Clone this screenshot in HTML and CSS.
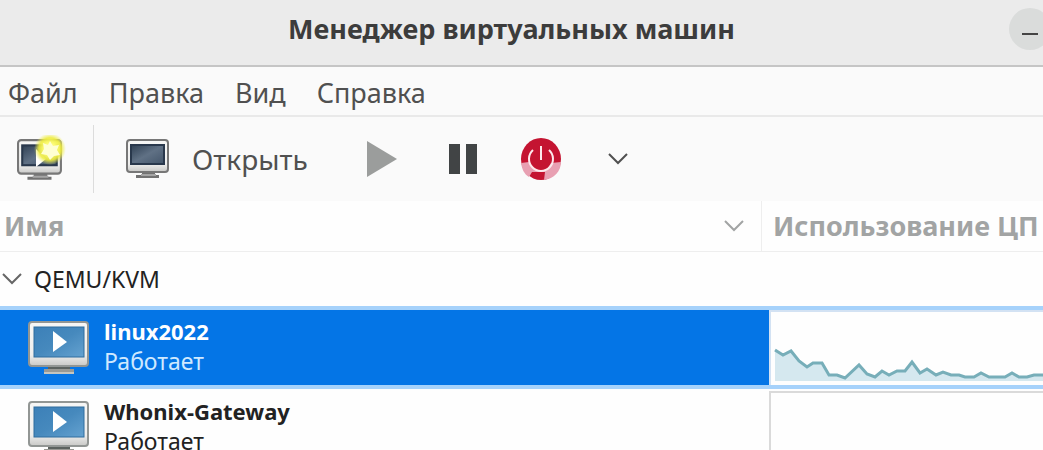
FILE: index.html
```html
<!DOCTYPE html>
<html lang="ru">
<head>
    <meta charset="UTF-8">
    <meta name="viewport" content="width=device-width, initial-scale=1.0">
    <title>Менеджер виртуальных машин</title>
    <link rel="stylesheet" href="styles.css">
</head>
<body>
    <!-- Shared icons -->
    <svg class="icon-defs" aria-hidden="true">
        <defs>
            <linearGradient id="screen-dark" x1="0" y1="0" x2="1" y2="1">
                <stop offset="0" stop-color="#2f4053"/>
                <stop offset="0.5" stop-color="#607185"/>
                <stop offset="1" stop-color="#43556a"/>
            </linearGradient>
            <linearGradient id="screen-blue" x1="0" y1="0" x2="1" y2="1">
                <stop offset="0" stop-color="#3c80b8"/>
                <stop offset="0.5" stop-color="#4689bd"/>
                <stop offset="1" stop-color="#65a2d0"/>
            </linearGradient>
            <linearGradient id="bezel" x1="0" y1="0" x2="0" y2="1">
                <stop offset="0" stop-color="#f6f6f5"/>
                <stop offset="0.75" stop-color="#eeeeed"/>
                <stop offset="1" stop-color="#c8c8c6"/>
            </linearGradient>
            <radialGradient id="glow">
                <stop offset="0" stop-color="#ffffd8"/>
                <stop offset="0.4" stop-color="#fbfa70"/>
                <stop offset="0.7" stop-color="#eeec3c" stop-opacity="0.9"/>
                <stop offset="1" stop-color="#f0f060" stop-opacity="0"/>
            </radialGradient>
            <symbol id="monitor" viewBox="0 0 44 40">
                <path d="M16 32h13v4h4v3H10v-3h6z" fill="#727272"/>
                <path d="M15 36h15" stroke="#a5a5a5" stroke-width="2"/>
                <rect x="1" y="1" width="41" height="32" rx="3" fill="url(#bezel)" stroke="#777" stroke-width="2"/>
                <rect x="5" y="6" width="33" height="19" fill="url(#screen-dark)" stroke="#29384c" stroke-width="2"/>
            </symbol>
            <symbol id="machine" viewBox="0 0 62 54">
                <path d="M21 44h20v4h5v5H16v-5h5z" fill="#999994"/>
                <path d="M20 45h22v3H20z" fill="#5c625f"/>
                <path d="M16 52h30" stroke="#c5c5bf" stroke-width="2"/>
                <rect x="1" y="1" width="59" height="44" rx="3" fill="url(#bezel)" stroke="#929694" stroke-width="2"/>
                <rect x="6" y="6" width="50" height="30" fill="url(#screen-blue)" stroke="#2e6c9e" stroke-width="1"/>
                <path d="M25 10v21l14-10z" fill="#fff"/>
            </symbol>
            <symbol id="chevron" viewBox="0 0 20 12">
                <path d="M1 1l9 9 9-9" fill="none" stroke="currentColor" stroke-width="2"/>
            </symbol>
        </defs>
    </svg>

    <header class="titlebar">
        <h1>Менеджер виртуальных машин</h1>
        <button class="minimize" type="button" aria-label="Свернуть"><span></span></button>
    </header>

    <nav class="menubar">
        <button type="button">Файл</button>
        <button type="button">Правка</button>
        <button type="button">Вид</button>
        <button type="button">Справка</button>
    </nav>

    <div class="toolbar">
        <button class="new-vm" type="button" aria-label="Создать виртуальную машину">
            <svg width="50" height="48" viewBox="0 0 50 48">
                <use href="#monitor" x="1" y="4" width="46" height="42"/>
                <path d="M20 14v18l10-8z" fill="#fff"/>
                <circle cx="34" cy="14" r="16" fill="url(#glow)"/>
                <path d="M34 6l3 5 6-1-2 5 3 5-6 1-4 4-3-5-6-1 3-5-1-6 5 2z" fill="#ffffd2"/>
            </svg>
        </button>
        <span class="separator"></span>
        <button class="open" type="button">
            <svg width="44" height="40"><use href="#monitor"/></svg>
            Открыть
        </button>
        <button class="run" type="button" aria-label="Запустить">
            <svg width="32" height="38" viewBox="0 0 32 38"><path d="M1 1v36l30-18z" fill="#9b9d9c"/></svg>
        </button>
        <button class="pause" type="button" aria-label="Приостановить">
            <svg width="30" height="32" viewBox="0 0 30 32"><path d="M1 1h11v30H1zM18 1h11v30H18z" fill="#414445"/></svg>
        </button>
        <button class="shutdown" type="button" aria-label="Выключить">
            <svg width="42" height="44" viewBox="0 0 42 44">
                <ellipse cx="21" cy="22" rx="20" ry="21" fill="#c41431"/>
                <path d="M1 26l8-1 3 5 5 4 9 0 5-8 10-1c0 9-7 17-17 18l1-8H12l-3 5c-5-3-7-8-8-14z" fill="#e8a0b2"/>
                <path d="M13 13a12 12 0 1 0 16 0M21 9v14" fill="none" stroke="#fde9ec" stroke-width="2"/>
            </svg>
        </button>
        <button class="more" type="button" aria-label="Другие действия">
            <svg width="20" height="12"><use href="#chevron"/></svg>
        </button>
    </div>

    <table class="machines">
        <thead>
            <tr>
                <th class="col-name">
                    <div class="heading">
                        Имя
                        <svg width="20" height="12"><use href="#chevron"/></svg>
                    </div>
                </th>
                <th class="col-cpu">Использование ЦП</th>
            </tr>
        </thead>
        <tbody>
            <tr class="connection">
                <td>
                    <div class="group">
                        <svg width="20" height="12"><use href="#chevron"/></svg>
                        QEMU/KVM
                    </div>
                </td>
                <td></td>
            </tr>
            <tr class="vm selected">
                <td>
                    <div class="vm-info">
                        <svg width="62" height="54"><use href="#machine"/></svg>
                        <div class="vm-text">
                            <strong>linux2022</strong>
                            <p>Работает</p>
                        </div>
                    </div>
                </td>
                <td class="usage">
                    <div class="graph">
                        <svg width="270" height="72" viewBox="0 0 270 72">
                            <path d="M2 38V69H270V63L261 63 254 65 246 65 239 61 232 65 216 65 208 61 201 65 192 65 186 63 178 63 170 60 163 63 154 57 147 61 139 50 132 59 124 59 116 63 109 59 102 65 94 62 86 53 72 66 64 63 56 63 49 51 40 51 34 55 26 49 18 39 10 43z" fill="#d5e8ef"/>
                            <path d="M2 38L10 43 18 39 26 49 34 55 40 51 49 51 56 63 64 63 72 66 86 53 94 62 102 65 109 59 116 63 124 59 132 59 139 50 147 61 154 57 163 63 170 60 178 63 186 63 192 65 201 65 208 61 216 65 232 65 239 61 246 65 254 65 261 63 270 63" fill="none" stroke="#77aeb9" stroke-width="3"/>
                        </svg>
                    </div>
                </td>
            </tr>
            <tr class="vm">
                <td>
                    <div class="vm-info">
                        <svg width="62" height="54"><use href="#machine"/></svg>
                        <div class="vm-text">
                            <strong>Whonix-Gateway</strong>
                            <p>Работает</p>
                        </div>
                    </div>
                </td>
                <td class="usage">
                    <div class="graph"></div>
                </td>
            </tr>
        </tbody>
    </table>
</body>
</html>
```
FILE: styles.css
```css
* {
    margin: 0;
    padding: 0;
    box-sizing: border-box;
}

body {
    height: 100vh;
    overflow: hidden;
    background: #fefefe;
    color: #222;
    font-family: 'Noto Sans', 'Open Sans', sans-serif;
    font-size: 23px;
}

button {
    border: none;
    background: none;
    color: inherit;
    font: inherit;
}

svg {
    display: block;
    flex-shrink: 0;
}

.icon-defs {
    position: absolute;
    width: 0;
    height: 0;
}

.titlebar {
    display: flex;
    align-items: center;
    height: 67px;
    padding: 0 0 8px 14px;
    background: #ebebeb;
    border-bottom: 2px solid #c5c5c5;
    color: #3c3c3c;
}

.titlebar h1 {
    flex: 1;
    font-size: 27px;
    line-height: 36px;
    text-align: center;
}

.minimize {
    width: 42px;
    height: 42px;
    margin-right: -8px;
    padding: 10px 13px 0;
    border-radius: 50%;
    background: #dadcdb;
}

.minimize span {
    display: block;
    height: 2px;
    background: #444;
}

.menubar {
    display: flex;
    gap: 31px;
    height: 50px;
    padding: 2px 8px 0;
    background: #fafafa;
    border-bottom: 2px solid #e9e9e9;
    color: #505050;
    font-size: 27px;
}

.toolbar {
    display: flex;
    align-items: center;
    height: 84px;
    padding: 0 16px;
    background: #fafafa;
    color: #505050;
    font-size: 28px;
}

.separator {
    width: 1px;
    height: 68px;
    margin: 0 32px 0 27px;
    background: #dcdcdc;
}

.open {
    display: flex;
    align-items: center;
    gap: 22px;
}

.run {
    margin-left: 58px;
}

.pause {
    margin-left: 50px;
}

.shutdown {
    margin-left: 42px;
}

.more {
    margin-left: 46px;
}

.machines {
    width: 100%;
    border-collapse: collapse;
    table-layout: fixed;
}

th {
    height: 50px;
    border-bottom: 1px solid #eee;
    color: #a2a4a4;
    font-size: 27px;
    line-height: 36px;
    text-align: left;
    white-space: nowrap;
}

.col-name {
    width: 73%;
    padding: 0 17px 0 4px;
    border-right: 1px solid #eee;
}

.col-cpu {
    padding-left: 11px;
}

.heading,
.group,
.vm-info {
    display: flex;
    align-items: center;
}

.heading {
    justify-content: space-between;
}

.connection td {
    height: 57px;
}

.group {
    gap: 12px;
    padding-left: 2px;
}

.group svg {
    color: #666;
}

.vm td {
    height: 79px;
}

.vm-info {
    gap: 14px;
    padding-left: 28px;
    line-height: 30px;
}

.vm-text {
    padding-bottom: 4px;
}

.vm-text strong {
    font-size: 22px;
}

.selected {
    background: #0475e6;
    border-top: 4px solid #a6d2fb;
    border-bottom: 4px solid #a6d2fb;
    color: #fff;
}

.selected p {
    color: #cfe9ff;
}

.vm .usage {
    padding-left: 8px;
    vertical-align: bottom;
}

.graph {
    height: 75px;
    overflow: hidden;
    border: 2px solid #dadada;
    border-width: 2px 0 0 2px;
    background: #fefefe;
}

.graph svg {
    margin-left: 2px;
}

.selected .graph {
    border-color: #d3e2f3;
}
```
